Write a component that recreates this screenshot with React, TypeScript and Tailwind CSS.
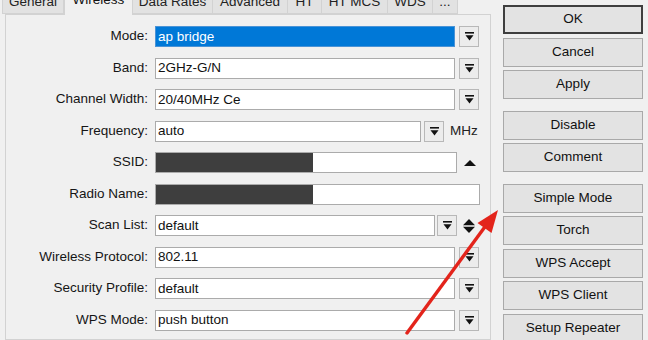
import React from "react";

type Field = {
  label: string;
  kind: "select" | "freq" | "ssid" | "radio" | "scan";
  value?: string;
  selected?: boolean;
};

const TABS = [
  { name: "General", w: "w-[62px]" },
  { name: "Wireless", w: "w-[69px]", active: true },
  { name: "Data Rates", w: "w-[81px]" },
  { name: "Advanced", w: "w-[76px]" },
  { name: "HT", w: "w-[35px]" },
  { name: "HT MCS", w: "w-[67px]" },
  { name: "WDS", w: "w-[46px]" },
  { name: "...", w: "w-[26px]" },
];

const FIELDS: Field[] = [
  { label: "Mode:", kind: "select", value: "ap bridge", selected: true },
  { label: "Band:", kind: "select", value: "2GHz-G/N" },
  { label: "Channel Width:", kind: "select", value: "20/40MHz Ce" },
  { label: "Frequency:", kind: "freq", value: "auto" },
  { label: "SSID:", kind: "ssid" },
  { label: "Radio Name:", kind: "radio" },
  { label: "Scan List:", kind: "scan", value: "default" },
  { label: "Wireless Protocol:", kind: "select", value: "802.11" },
  { label: "Security Profile:", kind: "select", value: "default" },
  { label: "WPS Mode:", kind: "select", value: "push button" },
];

const BUTTONS = [
  ["OK", "Cancel", "Apply"],
  ["Disable", "Comment"],
  ["Simple Mode", "Torch", "WPS Accept", "WPS Client", "Setup Repeater"],
];

function DropIcon() {
  return (
    <svg width="9" height="9" viewBox="0 0 9 9">
      <rect x="0" y="0" width="9" height="1.6" fill="#111" />
      <polygon points="0.5,3.3 8.5,3.3 4.5,8.5" fill="#111" />
    </svg>
  );
}

function DropButton() {
  return (
    <div className="w-[20px] h-[21px] shrink-0 flex items-center justify-center bg-[#ececec] border border-[#b8b8b8]">
      <DropIcon />
    </div>
  );
}

function Input({ w, value, selected, children }: { w: string; value?: string; selected?: boolean; children?: React.ReactNode }) {
  return (
    <div
      className={`${w} h-[21px] shrink-0 flex items-center pl-[2px] border ${
        selected ? "bg-[#0078d7] border-[#4a93d6] text-white" : "bg-white border-[#ababab] text-[#111]"
      }`}
    >
      {children ?? <span className="leading-none">{value}</span>}
    </div>
  );
}

function Redacted() {
  return <div className="w-[157px] h-[19px] -ml-[2px] bg-[#3e3e3e]" />;
}

function Row({ f }: { f: Field }) {
  return (
    <div className="flex items-center h-[21px]">
      <div className="w-[142px] text-right text-[#151515]">{f.label}</div>
      <div className="ml-[7px] flex items-center">
        {f.kind === "select" && (
          <>
            <Input w="w-[300px]" value={f.value} selected={f.selected} />
            <div className="ml-[4px]">
              <DropButton />
            </div>
          </>
        )}
        {f.kind === "freq" && (
          <>
            <Input w="w-[266px]" value={f.value} />
            <div className="ml-[3px]">
              <DropButton />
            </div>
            <span className="ml-[6px] text-[#222]">MHz</span>
          </>
        )}
        {f.kind === "ssid" && (
          <>
            <Input w="w-[302px]">
              <Redacted />
            </Input>
            <svg className="ml-[7px]" width="12" height="6" viewBox="0 0 12 6">
              <polygon points="0,6 12,6 6,0" fill="#111" />
            </svg>
          </>
        )}
        {f.kind === "radio" && (
          <Input w="w-[325px]">
            <Redacted />
          </Input>
        )}
        {f.kind === "scan" && (
          <>
            <Input w="w-[280px]" value={f.value} />
            <div className="ml-[2px]">
              <DropButton />
            </div>
            <svg className="ml-[6px]" width="12" height="14" viewBox="0 0 12 14">
              <polygon points="0,6.2 12,6.2 6,0" fill="#111" />
              <polygon points="0,7.8 12,7.8 6,14" fill="#111" />
            </svg>
          </>
        )}
      </div>
    </div>
  );
}

export default function App() {
  return (
    <div className="relative w-[648px] h-[340px] overflow-hidden bg-[#f0f0f0] flex font-['Liberation_Sans',Arial,sans-serif] text-[13.5px] text-[#111]">
      <div className="w-[491px] shrink-0 flex flex-col">
        <div className="h-[14px] flex items-end pl-[2px]">
          {TABS.map(t =>
            t.active ? (
              <div
                key={t.name}
                className={`${t.w} h-[26px] -mb-[1px] relative z-10 bg-[#f0f0f0] border-x border-t border-[#d2d2d2] flex items-end justify-center pb-[7px] leading-[16px]`}
              >
                {t.name}
              </div>
            ) : (
              <div
                key={t.name}
                className={`${t.w} h-[24px] bg-[#e2e2e2] border border-[#d2d2d2] -ml-px first:ml-0 flex items-end justify-center pb-[3px] leading-[16px] text-[#222]`}
              >
                {t.name}
              </div>
            )
          )}
        </div>
        <div className="ml-[5px] flex-1 border border-[#d2d2d2] pt-[11px] flex flex-col gap-[10.5px]">
          {FIELDS.map(f => (
            <Row key={f.label} f={f} />
          ))}
        </div>
      </div>

      <div className="pl-[12px] pt-[5px] flex flex-col gap-[11.5px]">
        {BUTTONS.map((group, gi) => (
          <div key={gi} className="flex flex-col gap-[3.5px]">
            {group.map(b => (
              <div
                key={b}
                className={`w-[140px] h-[29px] flex items-center justify-center bg-[#e3e3e3] text-[#111] ${
                  b === "OK" ? "border-2 border-[#3f3f3f]" : "border border-[#a9a9a9]"
                }`}
              >
                {b}
              </div>
            ))}
          </div>
        ))}
      </div>

      <svg className="absolute inset-0 pointer-events-none" width="648" height="340" viewBox="0 0 648 340">
        <line x1="407" y1="333" x2="487" y2="224" stroke="#e3241b" strokeWidth="3.4" strokeLinecap="round" />
        <polygon points="498,210 491.5,233 477.5,223" fill="#e3241b" />
      </svg>
    </div>
  );
}
